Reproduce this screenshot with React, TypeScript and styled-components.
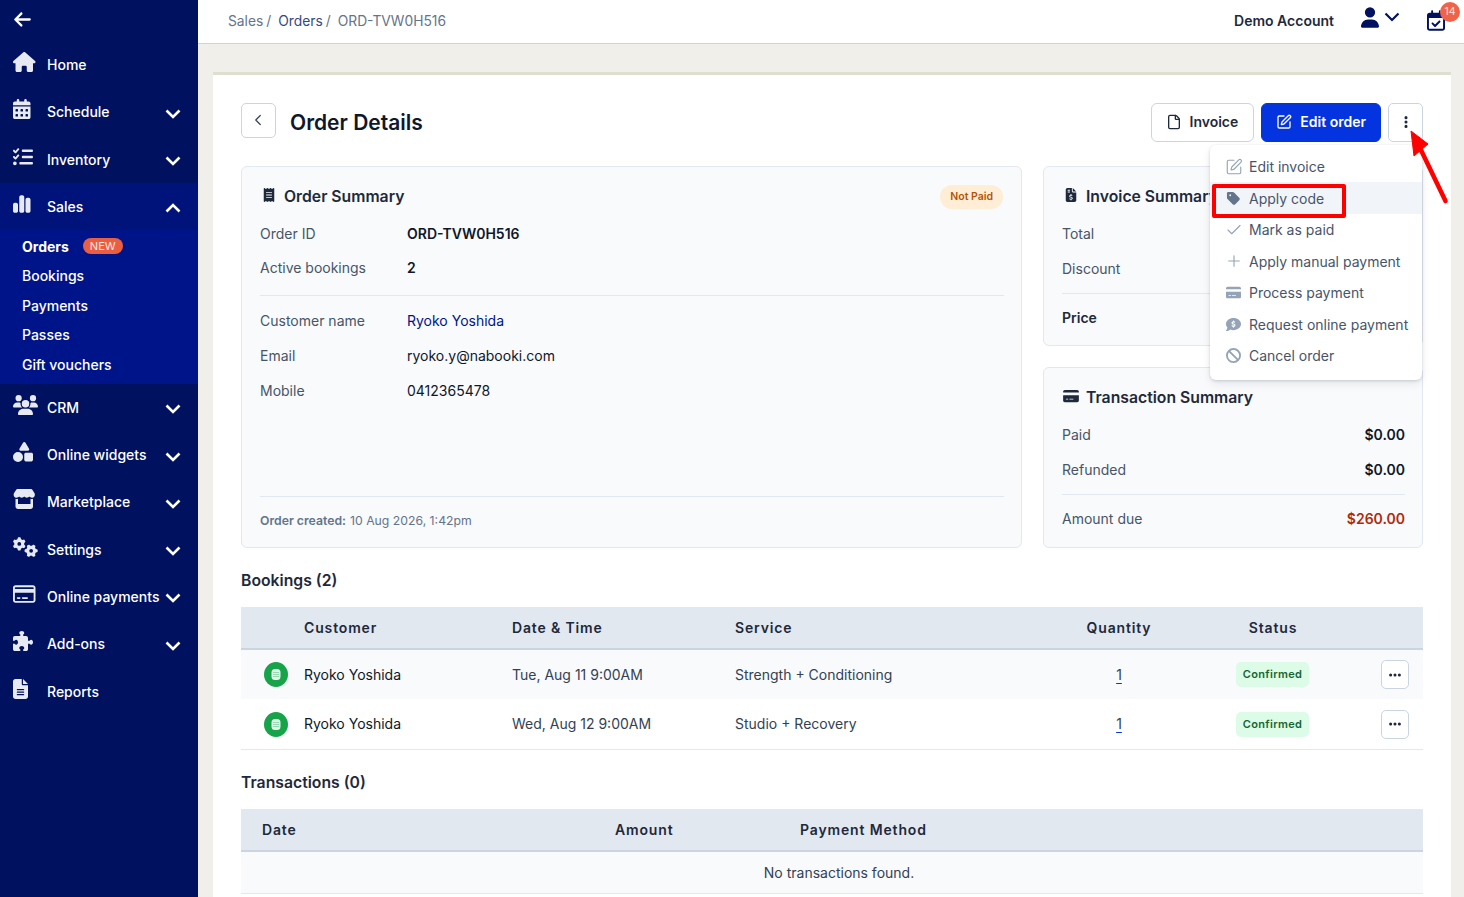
import React from "react";
import styled, { createGlobalStyle } from "styled-components";
import {
  FaHouse, FaCalendarDays, FaListCheck, FaChartSimple, FaUsers, FaShapes, FaStore, FaGears,
  FaRegCreditCard, FaPuzzlePiece, FaFileLines, FaArrowLeft, FaUser, FaRegCalendarCheck,
  FaReceipt, FaFileInvoiceDollar, FaCreditCard, FaEllipsis, FaEllipsisVertical, FaTag,
  FaCommentDollar, FaBan,
} from "react-icons/fa6";
import { Check, ChevronLeft, File as FileIcon, Plus, SquarePen } from "lucide-react";

const GlobalStyle = createGlobalStyle`
  html, body {
    margin: 0;
    height: 100%;
    overflow: hidden;
    font-family: Inter, "Noto Sans", sans-serif;
    background: #f0efe9;
  }
  * { box-sizing: border-box; }
`;

const Shell = styled.div`
  display: flex;
  height: 897px;
  overflow: hidden;
`;

const Sidebar = styled.nav`
  width: 198px;
  flex: none;
  background: #00115f;
  color: #fff;
`;

const BackRow = styled.div`
  height: 40.8px;
  padding: 10px 0 0 13px;
  font-size: 19px;
  line-height: 0;
`;

const NavRow = styled.div<{ $active?: boolean }>`
  display: flex;
  align-items: center;
  height: 47.3px;
  padding: 0 17px 0 13px;
  font-size: 14px;
  font-weight: 500;
  background: ${(p) => (p.$active ? "#00137a" : "transparent")};
`;

const NavIcon = styled.span`
  width: 34px;
  flex: none;
  display: flex;
  color: #e8eaf3;
  margin-top: -5px;

  svg {
    width: 26px;
    height: 20px;
    flex: none;
  }
`;

const NavLabel = styled.span`
  flex: 1;
  white-space: nowrap;
`;

const SubMenu = styled.div`
  background: #00148a;
  height: 153.65px;
  padding: 2px 0 0 22px;
`;

const SubItem = styled.div<{ $current?: boolean }>`
  display: flex;
  align-items: center;
  gap: 14px;
  height: ${(p) => (p.$current ? 29 : 29.5)}px;
  font-size: 14px;
  font-weight: ${(p) => (p.$current ? 700 : 500)};
`;

const NewBadge = styled.span`
  background: #ea5f42;
  color: #fde9e4;
  font-size: 11px;
  font-weight: 400;
  line-height: 16px;
  padding: 0 7px;
  border-radius: 8px;
`;

const Main = styled.div`
  flex: 1;
  min-width: 0;
  display: flex;
  flex-direction: column;
`;

const TopBar = styled.header`
  height: 44px;
  flex: none;
  display: flex;
  align-items: center;
  padding: 0 4px 3px 30px;
  background: #fff;
  border-bottom: 1px solid #cfd3d3;
`;

const Crumbs = styled.div`
  flex: 1;
  display: flex;
  gap: 7px;
  padding-top: 1px;
  font-size: 13.8px;
  color: #64748b;
`;

const CrumbLink = styled.span`
  color: #334a80;
`;

const CrumbSlash = styled.span`
  margin-left: 3px;
  color: #64748b;
`;

const AccountName = styled.span`
  font-size: 14px;
  font-weight: 600;
  color: #1e293b;
  margin-right: 27px;
`;

const AccountIcon = styled.span`
  display: flex;
  align-items: center;
  gap: 5px;
  color: #00115f;
  margin: -6px 27px 0 0;

  svg:first-child {
    width: 18px;
    height: 21px;
  }
`;

const CalendarWrap = styled.span`
  position: relative;
  display: flex;
  color: #00115f;
  margin-right: 15px;
  margin-top: 1px;

  svg {
    width: 18px;
    height: 21px;
  }
`;

const CalendarBadge = styled.span`
  position: absolute;
  top: -8px;
  left: 13px;
  width: 20px;
  height: 20px;
  border-radius: 50%;
  background: #ef6448;
  color: #fde9e4;
  font-size: 10.5px;
  line-height: 20px;
  text-align: center;
`;

const Content = styled.main`
  flex: 1;
  padding: 28px 13px 0 15px;
  overflow: hidden;
`;

const Sheet = styled.section`
  position: relative;
  background: #fff;
  border-top: 3px solid #dfdfd0;
  padding: 28px 28px 0;
  height: 900px;
`;

const PageHead = styled.div`
  display: flex;
  align-items: center;
  height: 39px;
  margin-bottom: 24px;
`;

const IconButton = styled.button`
  width: 35px;
  height: 35px;
  padding: 0;
  display: flex;
  align-items: center;
  justify-content: center;
  background: #fff;
  border: 1px solid #cbd5e1;
  border-radius: 5px;
  color: #334155;
`;

const BackButton = styled(IconButton)`
  align-self: flex-start;
  padding: 0 2px 2px 0;
`;

const PageTitle = styled.h1`
  flex: 1;
  margin: 0 0 0 14px;
  font-size: 21px;
  font-weight: 600;
  color: #0f172a;
`;

const HeadActions = styled.div`
  display: flex;
  gap: 7px;
`;

const ActionButton = styled.button<{ $primary?: boolean }>`
  height: 39px;
  padding: 0 ${(p) => (p.$primary ? 14 : 15)}px 2px 14px;
  display: flex;
  align-items: center;
  gap: 8px;
  font-family: inherit;
  font-size: 14px;
  font-weight: 600;
  border-radius: 6px;
  border: 1px solid ${(p) => (p.$primary ? "#0433e0" : "#cbd5e1")};
  background: ${(p) => (p.$primary ? "#0433e0" : "#fff")};
  color: ${(p) => (p.$primary ? "#fff" : "#1e293b")};
`;

const MoreButton = styled(IconButton)`
  height: 39px;
  padding-bottom: 2px;
  color: #1e293b;
  font-size: 14px;
`;

const SummaryGrid = styled.div`
  display: grid;
  grid-template-columns: 781px 380px;
  column-gap: 21px;
  height: 382px;
`;

const SideStack = styled.div`
  display: grid;
  grid-template-rows: 180px 181px;
  row-gap: 21px;
`;

const Card = styled.article`
  background: #f8fafc;
  border: 1px solid #e2e8f0;
  border-radius: 6px;
  padding: 17px 17px 8px 18px;
  display: flex;
  flex-direction: column;
`;

const CardHead = styled.div`
  display: flex;
  align-items: center;
  flex: none;
  height: 24px;
  margin-bottom: 8px;
`;

const CardTitle = styled.h2`
  flex: 1;
  display: flex;
  align-items: center;
  gap: 6px;
  margin: 0;
  font-size: 15.75px;
  font-weight: 600;
  color: #1e293b;
  white-space: nowrap;

  svg {
    width: 18px;
    height: 14px;
    margin-top: -2px;
  }
`;

const NotPaid = styled.span`
  margin: 1px 1px 0 0;
  background: #ffedd5;
  color: #b45309;
  font-size: 10.5px;
  font-weight: 600;
  line-height: 24px;
  padding: 0 10px;
  border-radius: 12px;
`;

const InfoRow = styled.div<{ $tight?: boolean }>`
  display: grid;
  grid-template-columns: 147px 1fr;
  align-items: center;
  flex: none;
  height: ${(p) => (p.$tight ? 34 : 35)}px;
`;

const SplitRow = styled.div`
  display: flex;
  justify-content: space-between;
  align-items: center;
  flex: none;
  height: 35px;
`;

const Label = styled.span<{ $strong?: boolean }>`
  font-size: 14px;
  font-weight: ${(p) => (p.$strong ? 600 : 400)};
  color: ${(p) => (p.$strong ? "#1e293b" : "#475569")};
`;

const Value = styled.span<{ $tone?: "link" | "due"; $bold?: boolean }>`
  font-size: 14px;
  font-weight: ${(p) => (p.$bold ? 600 : 400)};
  color: ${(p) => (p.$tone === "link" ? "#00148a" : p.$tone === "due" ? "#b02a0a" : "#0f172a")};
`;

const Rule = styled.hr<{ $before?: number; $after?: number }>`
  width: 100%;
  flex: none;
  margin: ${(p) => p.$before ?? 7}px 0 ${(p) => p.$after ?? 6}px;
  border: 0;
  border-top: 1px solid #e2e8f0;
`;

const Spacer = styled.div`
  flex: 1;
`;

const CreatedNote = styled.div`
  display: flex;
  align-items: center;
  gap: 4px;
  flex: none;
  height: 42px;
  padding-top: 5px;
  font-size: 12.25px;
  color: #64748b;

  b {
    font-weight: 600;
  }
`;

const SectionTitle = styled.h3`
  margin: 23px 0 16px;
  font-size: 15.75px;
  line-height: 20px;
  font-weight: 600;
  color: #1e293b;
`;

const BOOKING_COLS = "63px 208px 223px 322px 124px 182px 60px";
const TRANSACTION_COLS = "374px 185px 1fr";

const TableHead = styled.div<{ $cols: string }>`
  display: grid;
  grid-template-columns: ${(p) => p.$cols};
  align-items: center;
  height: 43px;
  background: #e2e8f0;
  border-bottom: 2px solid #cbd5e1;
  font-size: 14px;
  font-weight: 600;
  letter-spacing: 0.85px;
  color: #1e293b;
`;

const HeadCell = styled.span<{ $center?: boolean; $pad?: number }>`
  text-align: ${(p) => (p.$center ? "center" : "left")};
  padding-left: ${(p) => p.$pad ?? 0}px;
`;

const BookingRow = styled.div<{ $striped?: boolean }>`
  display: grid;
  grid-template-columns: ${BOOKING_COLS};
  align-items: center;
  height: ${(p) => (p.$striped ? 49 : 51)}px;
  line-height: ${(p) => (p.$striped ? "17px" : "16px")};
  background: ${(p) => (p.$striped ? "#f8fafc" : "#fff")};
  border-bottom: ${(p) => (p.$striped ? "0" : "1px solid #e2e8f0")};
  font-size: 14px;
  color: #334155;
`;

const RowStatus = styled.span`
  width: 24px;
  height: 25px;
  margin-left: 23px;
  border-radius: 50%;
  background: #16a34a;
  display: flex;
  align-items: center;
  justify-content: center;
`;

const CustomerName = styled.span`
  color: #0f172a;
`;

const QuantityLink = styled.span`
  justify-self: center;
  color: #334155;
  text-decoration: underline;
  text-decoration-color: #0433e0;
  text-underline-offset: 3px;
`;

const Confirmed = styled.span`
  justify-self: center;
  margin-left: 1px;
  background: #dcfce7;
  color: #166534;
  font-size: 11px;
  font-weight: 600;
  letter-spacing: 0.35px;
  line-height: 25px;
  padding: 0 7px;
  border-radius: 5px;
`;

const RowMenu = styled(IconButton)`
  width: 28px;
  height: 29px;
  justify-self: end;
  margin-right: 14px;
  color: #1e293b;
  font-size: 14px;
`;

const EmptyRow = styled.div`
  height: 42px;
  padding-left: 14px;
  display: flex;
  align-items: center;
  justify-content: center;
  background: #f8fafc;
  border-bottom: 1px solid #e2e8f0;
  font-size: 14px;
  color: #334155;
`;

const Menu = styled.ul`
  position: absolute;
  top: 70px;
  left: 997px;
  width: 212px;
  height: 235px;
  margin: 0;
  padding: 5.8px 0 0;
  list-style: none;
  background: #fff;
  border-radius: 6px;
  box-shadow: 0 1px 3px rgba(15, 23, 42, 0.16), 0 4px 10px rgba(15, 23, 42, 0.08);
`;

const MenuItem = styled.li<{ $hover?: boolean }>`
  display: flex;
  align-items: center;
  gap: 8px;
  height: 31.55px;
  padding-left: 16px;
  font-size: 14px;
  color: #475569;
  white-space: nowrap;
  background: ${(p) => (p.$hover ? "#f1f5f9" : "transparent")};

  svg {
    width: 15px;
    height: 15px;
    flex: none;
    color: ${(p) => (p.$hover ? "#64748b" : "#94a3b8")};
  }

  svg.lucide {
    width: 18px;
    height: 18px;
    margin: 0 -1.5px;
    stroke-width: 1.5;
  }
`;

const Highlight = styled.span`
  position: absolute;
  top: 109px;
  left: 999px;
  width: 134px;
  height: 34px;
  border: 4px solid #f00;
  border-radius: 2px;
`;

const Arrow = styled.svg`
  position: absolute;
  top: 53px;
  left: 1194px;
`;

const Chevron = ({ up }: { up?: boolean }) => (
  <svg width="16" height="10" viewBox="0 0 16 10" style={{ marginTop: 4 }}>
    <path d={up ? "M1.5 8.5 8 2l6.5 6.5" : "M1.5 1.5 8 8l6.5-6.5"} fill="none" stroke="#fff" strokeWidth="2.6" />
  </svg>
);

// fa icons are wider than tall, keep them on the left of the icon box
const fit = { preserveAspectRatio: "xMinYMid" };

const navTop = [
  { label: "Home", icon: <FaHouse {...fit} /> },
  { label: "Schedule", icon: <FaCalendarDays {...fit} />, more: true },
  { label: "Inventory", icon: <FaListCheck {...fit} />, more: true },
];

const navBottom = [
  { label: "CRM", icon: <FaUsers {...fit} />, more: true },
  { label: "Online widgets", icon: <FaShapes {...fit} />, more: true },
  { label: "Marketplace", icon: <FaStore {...fit} />, more: true },
  { label: "Settings", icon: <FaGears {...fit} />, more: true },
  { label: "Online payments", icon: <FaRegCreditCard {...fit} />, more: true },
  { label: "Add-ons", icon: <FaPuzzlePiece {...fit} />, more: true },
  { label: "Reports", icon: <FaFileLines {...fit} /> },
];

const bookings = [
  { date: "Tue, Aug 11 9:00AM", service: "Strength + Conditioning", striped: true },
  { date: "Wed, Aug 12 9:00AM", service: "Studio + Recovery", striped: false },
];

const menuItems = [
  { label: "Edit invoice", icon: <SquarePen /> },
  { label: "Apply code", icon: <FaTag />, hover: true },
  { label: "Mark as paid", icon: <Check /> },
  { label: "Apply manual payment", icon: <Plus /> },
  { label: "Process payment", icon: <FaCreditCard /> },
  { label: "Request online payment", icon: <FaCommentDollar /> },
  { label: "Cancel order", icon: <FaBan /> },
];

const renderNav = (items: typeof navBottom) =>
  items.map((item) => (
    <NavRow key={item.label}>
      <NavIcon>{item.icon}</NavIcon>
      <NavLabel>{item.label}</NavLabel>
      {item.more && <Chevron />}
    </NavRow>
  ));

export default function App() {
  return (
    <Shell>
      <GlobalStyle />
      <Sidebar>
        <BackRow>
          <FaArrowLeft />
        </BackRow>
        {renderNav(navTop)}
        <NavRow $active>
          <NavIcon>
            <FaChartSimple {...fit} />
          </NavIcon>
          <NavLabel>Sales</NavLabel>
          <Chevron up />
        </NavRow>
        <SubMenu>
          <SubItem $current>
            Orders <NewBadge>NEW</NewBadge>
          </SubItem>
          <SubItem>Bookings</SubItem>
          <SubItem>Payments</SubItem>
          <SubItem>Passes</SubItem>
          <SubItem>Gift vouchers</SubItem>
        </SubMenu>
        {renderNav(navBottom)}
      </Sidebar>

      <Main>
        <TopBar>
          <Crumbs>
            <span>
              Sales<CrumbSlash>/</CrumbSlash>
            </span>
            <CrumbLink>
              Orders<CrumbSlash>/</CrumbSlash>
            </CrumbLink>
            <span>ORD-TVW0H516</span>
          </Crumbs>
          <AccountName>Demo Account</AccountName>
          <AccountIcon>
            <FaUser />
            <svg width="16" height="10" viewBox="0 0 16 10">
              <path d="M1.5 1.5 8 8l6.5-6.5" fill="none" stroke="#00115f" strokeWidth="2.2" />
            </svg>
          </AccountIcon>
          <CalendarWrap>
            <FaRegCalendarCheck />
            <CalendarBadge>14</CalendarBadge>
          </CalendarWrap>
        </TopBar>

        <Content>
          <Sheet>
            <PageHead>
              <BackButton>
                <ChevronLeft size={18} strokeWidth={1.6} />
              </BackButton>
              <PageTitle>Order Details</PageTitle>
              <HeadActions>
                <ActionButton>
                  <FileIcon size={16} strokeWidth={2} />
                  Invoice
                </ActionButton>
                <ActionButton $primary>
                  <SquarePen size={16} strokeWidth={2} />
                  Edit order
                </ActionButton>
                <MoreButton>
                  <FaEllipsisVertical />
                </MoreButton>
              </HeadActions>
            </PageHead>

            <SummaryGrid>
              <Card>
                <CardHead>
                  <CardTitle>
                    <FaReceipt />
                    Order Summary
                  </CardTitle>
                  <NotPaid>Not Paid</NotPaid>
                </CardHead>
                <InfoRow $tight>
                  <Label>Order ID</Label>
                  <Value $bold>ORD-TVW0H516</Value>
                </InfoRow>
                <InfoRow $tight>
                  <Label>Active bookings</Label>
                  <Value $bold>2</Value>
                </InfoRow>
                <Rule $before={11} $after={7} />
                <InfoRow>
                  <Label>Customer name</Label>
                  <Value $tone="link">Ryoko Yoshida</Value>
                </InfoRow>
                <InfoRow>
                  <Label>Email</Label>
                  <Value>ryoko.y@nabooki.com</Value>
                </InfoRow>
                <InfoRow>
                  <Label>Mobile</Label>
                  <Value>0412365478</Value>
                </InfoRow>
                <Spacer />
                <Rule $before={0} $after={0} />
                <CreatedNote>
                  <b>Order created:</b> 10 Aug 2026, 1:42pm
                </CreatedNote>
              </Card>

              <SideStack>
                <Card>
                  <CardHead>
                    <CardTitle>
                      <FaFileInvoiceDollar />
                      Invoice Summary
                    </CardTitle>
                  </CardHead>
                  <SplitRow>
                    <Label>Total</Label>
                  </SplitRow>
                  <SplitRow>
                    <Label>Discount</Label>
                  </SplitRow>
                  <Rule />
                  <SplitRow>
                    <Label $strong>Price</Label>
                  </SplitRow>
                </Card>
                <Card>
                  <CardHead>
                    <CardTitle>
                      <FaCreditCard />
                      Transaction Summary
                    </CardTitle>
                  </CardHead>
                  <SplitRow>
                    <Label>Paid</Label>
                    <Value $bold>$0.00</Value>
                  </SplitRow>
                  <SplitRow>
                    <Label>Refunded</Label>
                    <Value $bold>$0.00</Value>
                  </SplitRow>
                  <Rule />
                  <SplitRow>
                    <Label>Amount due</Label>
                    <Value $bold $tone="due">
                      $260.00
                    </Value>
                  </SplitRow>
                </Card>
              </SideStack>
            </SummaryGrid>

            <SectionTitle>Bookings (2)</SectionTitle>
            <TableHead $cols={BOOKING_COLS}>
              <span />
              <HeadCell>Customer</HeadCell>
              <HeadCell>Date &amp; Time</HeadCell>
              <HeadCell>Service</HeadCell>
              <HeadCell $center>Quantity</HeadCell>
              <HeadCell $center $pad={2}>
                Status
              </HeadCell>
              <span />
            </TableHead>
            {bookings.map((b) => (
              <BookingRow key={b.date} $striped={b.striped}>
                <RowStatus>
                  <svg width="10" height="11" viewBox="0 0 10 11">
                    <rect x="0.5" y="0" width="9" height="11" rx="3.5" fill="#e3f7ea" />
                    <path d="M2 3.5h6M2 5.5h6M2 7.5h6" stroke="#7fd3a0" strokeWidth="0.8" />
                  </svg>
                </RowStatus>
                <CustomerName>Ryoko Yoshida</CustomerName>
                <span>{b.date}</span>
                <span>{b.service}</span>
                <QuantityLink>1</QuantityLink>
                <Confirmed>Confirmed</Confirmed>
                <RowMenu>
                  <FaEllipsis />
                </RowMenu>
              </BookingRow>
            ))}

            <SectionTitle>Transactions (0)</SectionTitle>
            <TableHead $cols={TRANSACTION_COLS}>
              <HeadCell $pad={21}>Date</HeadCell>
              <HeadCell>Amount</HeadCell>
              <HeadCell>Payment Method</HeadCell>
            </TableHead>
            <EmptyRow>No transactions found.</EmptyRow>

            <Menu>
              {menuItems.map((m) => (
                <MenuItem key={m.label} $hover={m.hover}>
                  {m.icon}
                  {m.label}
                </MenuItem>
              ))}
            </Menu>
            <Highlight />
            <Arrow width="44" height="82" viewBox="0 0 44 82">
              <path d="M4 3 7 28 21 16Z" fill="#f00" stroke="#f00" strokeLinejoin="round" />
              <path d="M13 20 38.5 73" fill="none" stroke="#f00" strokeWidth="4.5" strokeLinecap="round" />
            </Arrow>
          </Sheet>
        </Content>
      </Main>
    </Shell>
  );
}
